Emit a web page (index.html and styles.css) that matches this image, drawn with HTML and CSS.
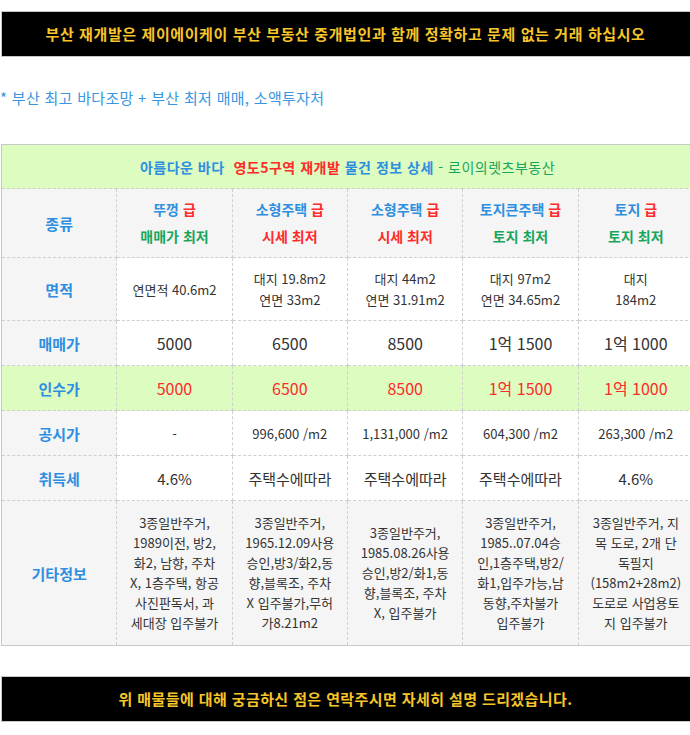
FILE: index.html
```html
<!DOCTYPE html>
<html lang="ko">
<head>
<meta charset="utf-8">
<link rel="stylesheet" href="styles.css">
</head>
<body>
<div class="page">
  <div class="bar bar-top">부산 재개발은 제이에이케이 부산 부동산 중개법인과 함께 정확하고 문제 없는 거래 하십시오</div>
  <p class="intro">* 부산 최고 바다조망 + 부산 최저 매매, 소액투자처</p>
  <table class="info">
    <colgroup><col><col><col><col><col><col></colgroup>
    <tr class="r-title">
      <td colspan="6"><span class="b">아름다운 바다</span>&nbsp;&nbsp;<span class="r">영도5구역 재개발</span> <span class="b">물건 정보 상세</span> <span class="g">- 로이의렛츠부동산</span></td>
    </tr>
    <tr class="r-kind">
      <th>종류</th>
      <td><span class="b">뚜껑</span> <span class="r">급</span><br><span class="g">매매가 최저</span></td>
      <td><span class="b">소형주택</span> <span class="r">급</span><br><span class="r">시세 최저</span></td>
      <td><span class="b">소형주택</span> <span class="r">급</span><br><span class="r">시세 최저</span></td>
      <td><span class="b">토지큰주택</span> <span class="r">급</span><br><span class="g">토지 최저</span></td>
      <td><span class="b">토지</span> <span class="r">급</span><br><span class="g">토지 최저</span></td>
    </tr>
    <tr class="r-area">
      <th>면적</th>
      <td>연면적 40.6m2</td>
      <td>대지 19.8m2<br>연면 33m2</td>
      <td>대지 44m2<br>연면 31.91m2</td>
      <td>대지 97m2<br>연면 34.65m2</td>
      <td>대지<br>184m2</td>
    </tr>
    <tr class="r-price">
      <th>매매가</th>
      <td>5000</td><td>6500</td><td>8500</td><td>1억 1500</td><td>1억 1000</td>
    </tr>
    <tr class="r-take">
      <th>인수가</th>
      <td>5000</td><td>6500</td><td>8500</td><td>1억 1500</td><td>1억 1000</td>
    </tr>
    <tr class="r-pub">
      <th>공시가</th>
      <td>-</td><td>996,600 /m2</td><td>1,131,000 /m2</td><td>604,300 /m2</td><td>263,300 /m2</td>
    </tr>
    <tr class="r-tax">
      <th>취득세</th>
      <td>4.6%</td><td>주택수에따라</td><td>주택수에따라</td><td>주택수에따라</td><td>4.6%</td>
    </tr>
    <tr class="r-etc">
      <th>기타정보</th>
      <td>3종일반주거,<br>1989이전, 방2,<br>화2, 남향, 주차<br>X, 1층주택, 항공<br>사진판독서, 과<br>세대장 입주불가</td>
      <td>3종일반주거,<br>1965.12.09사용<br>승인,방3/화2,동<br>향,블록조, 주차<br>X 입주불가,무허<br>가8.21m2</td>
      <td>3종일반주거,<br>1985.08.26사용<br>승인,방2/화1,동<br>향,블록조, 주차<br>X, 입주불가</td>
      <td>3종일반주거,<br>1985..07.04승<br>인,1층주택,방2/<br>화1,입주가능,남<br>동향,주차불가<br>입주불가</td>
      <td>3종일반주거, 지<br>목 도로, 2개 단<br>독필지<br>(158m2+28m2)<br>도로로 사업용토<br>지 입주불가</td>
    </tr>
  </table>
  <div class="bar bar-bottom">위 매물들에 대해 궁금하신 점은 연락주시면 자세히 설명 드리겠습니다.</div>
</div>
</body>
</html>
```

FILE: styles.css
```css
html, body {
  margin: 0;
  padding: 0;
  background: #fff;
  overflow: hidden;
}
body {
  font-family: "Noto Sans CJK KR", "Noto Sans", sans-serif;
  color: #333;
}
.page {
  width: 694px;
  margin-left: 1px;
  padding-top: 11px;
}
.bar {
  background: #000;
  border: 1px solid #c8c8c8;
  color: #f7c52a;
  font-weight: bold;
  text-align: center;
  box-sizing: border-box;
  width: 100%;
  height: 46px;
  line-height: 44px;
  padding-right: 5px;
}
.bar-top { font-size: 15px; letter-spacing: 0.6px; }
.bar-bottom { font-size: 15px; letter-spacing: 0.4px; margin-top: 30px; }
.intro {
  margin: 31px 0 0 -1px;
  font-size: 15px;
  letter-spacing: 0.3px;
  line-height: 20px;
  color: #3a96e0;
}
.info {
  margin-top: 36px;
  width: 693px;
  table-layout: fixed;
  border-collapse: collapse;
  border: 1px solid #c8c8c8;
  text-align: center;
}
.info th, .info td {
  border: 1px dashed #cfcfcf;
  padding: 0 6px;
  font-weight: normal;
}
.info th {
  background: #f5f5f5;
  color: #2e8fe0;
  font-weight: bold;
  font-size: 15px;
}
.b { color: #2e8fe0; font-weight: bold; }
.r { color: #ff2a2a; font-weight: bold; }
.g { color: #19a55c; font-weight: bold; }
.r-title td {
  background: #dcfcc0;
  height: 43px;
  font-size: 14px;
  letter-spacing: 0.5px;
  border-top: 1px solid #c8c8c8;
}
.r-title .g { font-weight: normal; }
.r-kind td {
  background: #f5f5f5;
  height: 68px;
  font-size: 14px;
  line-height: 27px;
}
.r-area td {
  height: 62px;
  font-size: 13px;
  line-height: 21px;
}
.r-price td, .r-take td {
  height: 44px;
  font-size: 16px;
}
.r-take th, .r-take td { background: #dcfcc0; }
.r-take td { color: #ff2a2a; }
.r-pub td { height: 44px; font-size: 13px; }
.r-tax td { height: 44px; font-size: 15px; }
.r-etc th, .r-etc td { background: #f5f5f5; }
.r-etc td {
  height: 144px;
  font-size: 13px;
  line-height: 20px;
  white-space: nowrap;
  padding: 0 2px;
}
.r-etc { border-bottom: 1px solid #c8c8c8; }
```
